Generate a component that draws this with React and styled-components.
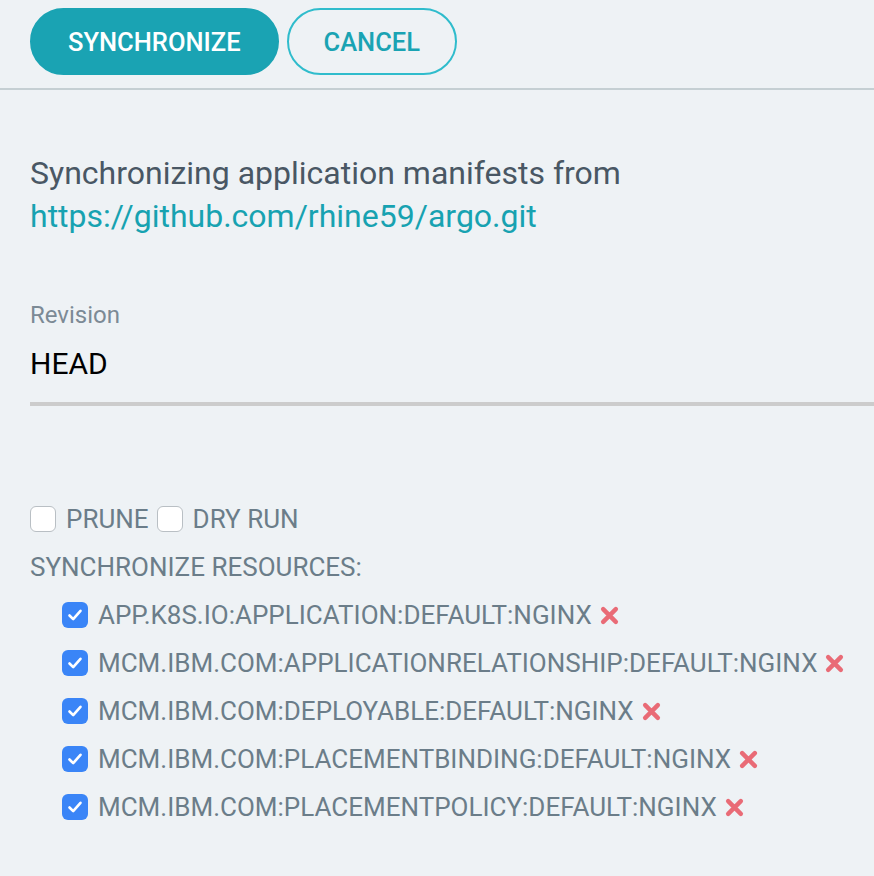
import React, { useState } from "react";
import styled, { createGlobalStyle } from "styled-components";

const GlobalStyle = createGlobalStyle`
  html, body {
    margin: 0;
    padding: 0;
    background: #eef2f5;
    font-family: Roboto, "Noto Sans", "Liberation Sans", sans-serif;
  }
`;

const Page = styled.div`
  width: 874px;
  height: 876px;
  overflow: hidden;
  background: #eef2f5;
`;

const Toolbar = styled.div`
  display: flex;
  gap: 8px;
  padding: 8px 0 13px 30px;
  border-bottom: 2px solid #c5cfd3;
`;

const Button = styled.button`
  height: 67px;
  padding: 0 ${(p) => (p.primary ? "36px" : "35px")};
  border-radius: 34px;
  border: 2px solid ${(p) => (p.primary ? "#1aa3b3" : "#2fbccc")};
  background: ${(p) => (p.primary ? "#1aa3b3" : "transparent")};
  color: ${(p) => (p.primary ? "#fff" : "#1aa3b3")};
  font-family: Roboto, "Liberation Sans", sans-serif;
  font-size: 25.5px;
  font-weight: 500;
  cursor: pointer;
`;

const Content = styled.div`
  padding: 62px 0 0 30px;
`;

const Intro = styled.p`
  margin: 0;
  font-size: 32px;
  line-height: 43px;
  color: #495764;
`;

const RepoLink = styled.a`
  color: #17a2b1;
  text-decoration: none;
`;

const Field = styled.div`
  margin-top: 62px;
  border-bottom: 4px solid #cccccc;
  padding-bottom: 18px;
`;

const FieldLabel = styled.div`
  font-size: 24px;
  line-height: 30px;
  color: #7c8a95;
`;

const FieldValue = styled.div`
  margin-top: 14px;
  font-size: 30px;
  line-height: 40px;
  color: #000;
`;

const Options = styled.div`
  display: flex;
  align-items: center;
  gap: 8px;
  height: 48px;
  margin-top: 89px;
`;

const Check = styled.label`
  display: flex;
  align-items: center;
  gap: 10px;
  font-size: 26px;
  color: #6b7d89;
  cursor: pointer;
`;

const Box = styled.span`
  width: 26px;
  height: 26px;
  box-sizing: border-box;
  border-radius: 6px;
  display: flex;
  align-items: center;
  justify-content: center;
  background: ${(p) => (p.checked ? "#3a85f7" : "#fff")};
  border: ${(p) => (p.checked ? "none" : "1px solid #b9bfc4")};
  flex-shrink: 0;
`;

const SectionTitle = styled.div`
  font-size: 26px;
  line-height: 48px;
  color: #6b7d89;
`;

const ResourceList = styled.div`
  padding-left: 32px;
`;

const ResourceRow = styled.div`
  display: flex;
  align-items: center;
  height: 48px;
`;

const RemoveIcon = styled.svg`
  margin-left: 8px;
  flex-shrink: 0;
  cursor: pointer;
`;

const resources = [
  "APP.K8S.IO:APPLICATION:DEFAULT:NGINX",
  "MCM.IBM.COM:APPLICATIONRELATIONSHIP:DEFAULT:NGINX",
  "MCM.IBM.COM:DEPLOYABLE:DEFAULT:NGINX",
  "MCM.IBM.COM:PLACEMENTBINDING:DEFAULT:NGINX",
  "MCM.IBM.COM:PLACEMENTPOLICY:DEFAULT:NGINX",
];

function Checkbox({ checked, onToggle, children }) {
  return (
    <Check onClick={onToggle}>
      <Box checked={checked}>
        {checked && (
          <svg width="18" height="18" viewBox="0 0 18 18">
            <path
              d="M3.5 9.5 L7.2 13.2 L14.5 4.8"
              fill="none"
              stroke="#fff"
              strokeWidth="2.6"
              strokeLinecap="round"
              strokeLinejoin="round"
            />
          </svg>
        )}
      </Box>
      {children}
    </Check>
  );
}

export default function App() {
  const [prune, setPrune] = useState(false);
  const [dryRun, setDryRun] = useState(false);
  const [selected, setSelected] = useState(resources.map(() => true));

  return (
    <Page>
      <GlobalStyle />
      <Toolbar>
        <Button primary>SYNCHRONIZE</Button>
        <Button>CANCEL</Button>
      </Toolbar>
      <Content>
        <Intro>
          Synchronizing application manifests from
          <br />
          <RepoLink href="#">https://github.com/rhine59/argo.git</RepoLink>
        </Intro>
        <Field>
          <FieldLabel>Revision</FieldLabel>
          <FieldValue>HEAD</FieldValue>
        </Field>
        <Options>
          <Checkbox checked={prune} onToggle={() => setPrune(!prune)}>
            PRUNE
          </Checkbox>
          <Checkbox checked={dryRun} onToggle={() => setDryRun(!dryRun)}>
            DRY RUN
          </Checkbox>
        </Options>
        <SectionTitle>SYNCHRONIZE RESOURCES:</SectionTitle>
        <ResourceList>
          {resources.map((name, i) => (
            <ResourceRow key={name}>
              <Checkbox
                checked={selected[i]}
                onToggle={() =>
                  setSelected(selected.map((v, j) => (j === i ? !v : v)))
                }
              >
                {name}
              </Checkbox>
              <RemoveIcon width="19" height="19" viewBox="0 0 18 18">
                <path
                  d="M3 3 L15 15 M15 3 L3 15"
                  stroke="#e96b76"
                  strokeWidth="4.2"
                  strokeLinecap="round"
                />
              </RemoveIcon>
            </ResourceRow>
          ))}
        </ResourceList>
      </Content>
    </Page>
  );
}
